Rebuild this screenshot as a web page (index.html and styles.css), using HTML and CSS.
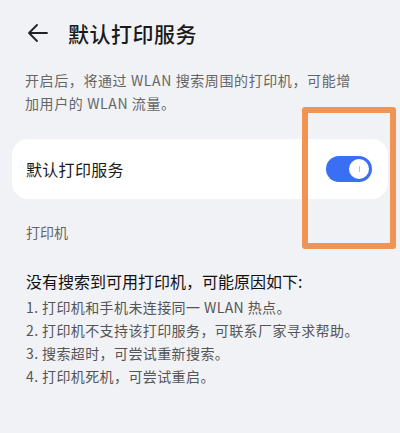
FILE: index.html
```html
<!DOCTYPE html>
<html lang="zh-CN">
<head>
<meta charset="UTF-8">
<meta name="viewport" content="width=device-width, initial-scale=1.0">
<title>默认打印服务</title>
<link rel="stylesheet" href="styles.css">
</head>
<body>

<header class="top">
  <svg class="back" width="24" height="24" viewBox="0 0 24 24">
    <path d="M21 12H3M11 4l-8 8 8 8" fill="none" stroke="#222" stroke-width="1.8" stroke-linecap="round" stroke-linejoin="round"/>
  </svg>
  <h1>默认打印服务</h1>
</header>

<p class="desc">开启后，将通过 WLAN 搜索周围的打印机，可能增<br>加用户的 WLAN 流量。</p>

<div class="card">
  <span>默认打印服务</span>
  <div class="switch"><div class="knob"></div></div>
  <div class="mark"></div>
</div>

<div class="sub">打印机</div>

<div class="empty">
  <h2>没有搜索到可用打印机，可能原因如下:</h2>
  <ol>
    <li>1. 打印机和手机未连接同一 WLAN 热点。</li>
    <li>2. 打印机不支持该打印服务，可联系厂家寻求帮助。</li>
    <li>3. 搜索超时，可尝试重新搜索。</li>
    <li>4. 打印机死机，可尝试重启。</li>
  </ol>
</div>

</body>
</html>
```

FILE: styles.css
```css
body {
  margin: 0;
  font-family: "Noto Sans CJK SC", "Noto Sans", sans-serif;
  background: #f1f2f6;
  color: #1a1a1a;
  width: 400px;
  height: 433px;
  overflow: hidden;
}

.top {
  display: flex;
  align-items: center;
  height: 66px;
  padding: 0 0 0 26px;
}

.back {
  flex: none;
}

.top h1 {
  margin: 0 0 0 18px;
  font-size: 21px;
  font-weight: 500;
  letter-spacing: 0.5px;
}

.desc {
  margin: 3px 20px 0 25px;
  font-size: 14px;
  line-height: 23px;
  letter-spacing: 0.6px;
  color: #666;
}

.card {
  position: relative;
  margin: 24px 12px 0;
  height: 60px;
  background: #fff;
  border-radius: 16px;
  display: flex;
  align-items: center;
  justify-content: space-between;
  padding: 0 16px 0 14px;
  font-size: 16px;
  letter-spacing: 0.3px;
}

.switch {
  width: 46px;
  height: 26px;
  border-radius: 13px;
  background: #3a6ff4;
  position: relative;
}

.knob {
  position: absolute;
  right: 3px;
  top: 3px;
  width: 20px;
  height: 20px;
  border-radius: 50%;
  background: #fff;
}

.knob::after {
  content: "";
  position: absolute;
  left: 9.5px;
  top: 7px;
  width: 1px;
  height: 6px;
  background: #b8bfd6;
}

.mark {
  position: absolute;
  left: 290px;
  top: -32px;
  width: 82px;
  height: 130px;
  border: 6px solid #ef9452;
  border-radius: 3px;
}

.sub {
  margin: 22px 0 0 26px;
  font-size: 14px;
  color: #666;
  line-height: 22px;
}

.empty {
  padding: 26px 0 0 26px;
}

.empty h2 {
  margin: 0;
  font-size: 16px;
  font-weight: 400;
  line-height: 24px;
  color: #111;
}

.empty ol {
  margin: 3px 0 0;
  padding: 0;
  list-style: none;
  font-size: 14px;
  line-height: 23px;
  letter-spacing: 0.4px;
  color: #555;
}
```
